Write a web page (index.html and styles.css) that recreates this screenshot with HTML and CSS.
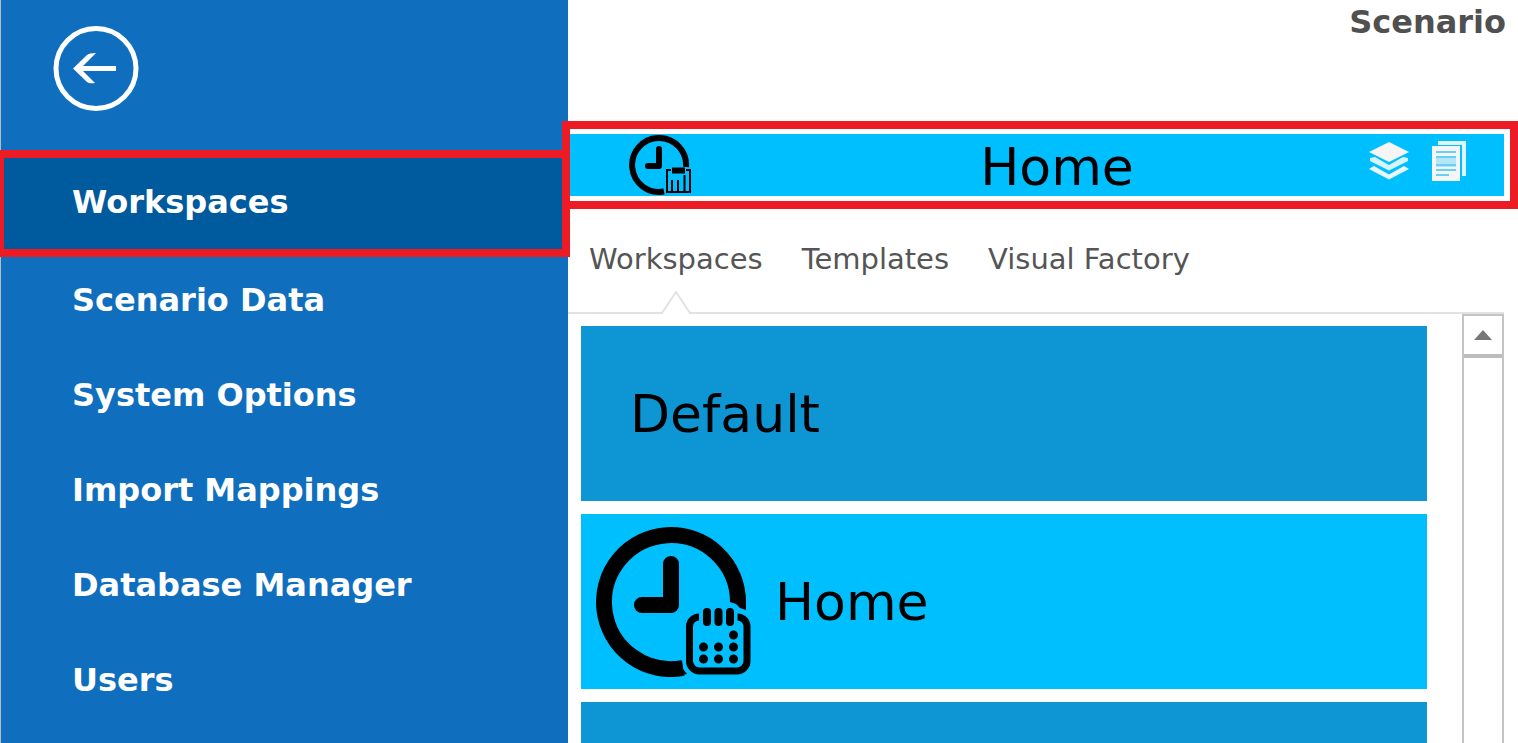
FILE: index.html
```html
<!DOCTYPE html>
<html lang="en">
<head>
  <meta charset="UTF-8" />
  <meta name="viewport" content="width=device-width, initial-scale=1.0"/>
  <title>Workspaces</title>
  <link rel="stylesheet" href="styles.css">
</head>
<body>
  <div class="app">
    <aside class="sidebar">
      <button class="back" type="button" aria-label="Back">
        <svg viewBox="0 0 86 86">
          <circle cx="43" cy="42.5" r="40" fill="none" stroke="#fff" stroke-width="5"/>
          <path d="M20 42.5L34 29Q36 27 43 27L30 40H63V45H30L42 57Q36 58 34 56Z" fill="#fff"/>
        </svg>
      </button>
      <nav class="menu">
        <a href="#" class="active">Workspaces</a>
        <a href="#">Scenario Data</a>
        <a href="#">System Options</a>
        <a href="#">Import Mappings</a>
        <a href="#">Database Manager</a>
        <a href="#">Users</a>
      </nav>
    </aside>

    <main class="main">
      <h1 class="heading">Scenario</h1>

      <header class="bar">
        <svg class="bar-clock" viewBox="0 0 62 60" fill="none" stroke="#000">
          <path d="M35 56.5A27 27 0 1 1 57 32" stroke-width="6"/>
          <path d="M30 14V31H19" stroke-width="6" stroke-linecap="round" stroke-linejoin="round"/>
          <path d="M42 35H38V57H61V35H57" stroke-width="2"/>
          <path d="M43 35.5H56" stroke-width="6"/>
          <path d="M43 45V56M49 45V56M55.5 40V56" stroke-width="2"/>
        </svg>
        <h2>Home</h2>
        <div class="bar-actions">
          <button type="button" aria-label="Layers">
            <svg width="40" height="40" viewBox="0 0 40 40">
              <path d="M20 1L40 11L20 21L0 11Z" fill="#f5f5f5"/>
              <path d="M1 20V17L6 16L20 24L34 16L39 17V20L20 29.5Z" fill="#d8f3fc"/>
              <path d="M0 28L5 25L20 33.5L35 25L40 28L20 38.5Z" fill="#eaf6fa"/>
            </svg>
          </button>
          <button type="button" aria-label="Documents">
            <svg width="34" height="40" viewBox="0 0 34 40">
              <path d="M6 0H34V35H30V4H6Z" fill="#dff4fb"/>
              <path d="M0 5H28V40H0Z" fill="#f5f5f5"/>
              <path d="M4 15H24V26H4Z" fill="#b5e6f7"/>
              <path d="M4 11H24M4 16H24M4 24H24M4 29H24M4 34H17" stroke="#66d0f5" stroke-width="2"/>
            </svg>
          </button>
        </div>
      </header>

      <nav class="tabs">
        <a href="#" class="current">Workspaces
          <svg class="notch" viewBox="0 0 32 24">
            <path d="M0 24V22H1L16 1L31 22H32V24Z" fill="#fff"/>
            <path d="M0 23H2L16 2L30 23H32" fill="none" stroke="#e2e2e2" stroke-width="2"/>
          </svg>
        </a>
        <a href="#">Templates</a>
        <a href="#">Visual Factory</a>
      </nav>

      <div class="content">
        <div class="tiles">
          <a href="#" class="tile">Default</a>
          <a href="#" class="tile home">
            <svg viewBox="0 0 156 150" fill="none" stroke="#000">
              <path d="M87 141A67 67 0 1 1 142 75" stroke-width="16"/>
              <path d="M134 74H150V83L144 81L140 77L134 75ZM86 133L87 142L91 147L82 149Z" fill="#000" stroke="none"/>
              <path d="M75 37V78H46" stroke-width="16" stroke-linecap="round" stroke-linejoin="round"/>
              <path d="M103 90A9.5 9.5 0 0 0 93.5 99.5V134A10 10 0 0 0 103.5 144H141A10 10 0 0 0 151 134V99.5A9.5 9.5 0 0 0 141.5 90" stroke-width="7"/>
              <path d="M111 85V95M122.5 85V95M134 85V95" stroke-width="8" stroke-linecap="round"/>
              <path d="M137.5 108h0M107.5 120h0M122.5 120h0M137.5 120h0M107.5 132h0M122.5 132h0M137.5 132h0" stroke-width="9" stroke-linecap="round"/>
            </svg>
            Home
          </a>
          <div class="tile"></div>
        </div>
        <div class="scroll">
          <button type="button" aria-label="Scroll up"></button>
        </div>
      </div>
    </main>
  </div>
</body>
</html>
```
FILE: styles.css
```css
* {
  margin: 0;
  box-sizing: border-box;
}

body {
  font-family: Verdana, "DejaVu Sans", sans-serif;
  background: #fff;
}

a {
  color: inherit;
  text-decoration: none;
}

button {
  border: 0;
  padding: 0;
  background: none;
  cursor: pointer;
}

svg {
  display: block;
}

.app {
  display: flex;
  height: 100vh;
  overflow: hidden;
}

/* Sidebar */
.sidebar {
  flex: 0 0 568px;
  background: #106ebe;
  border-left: 1px solid #b4bcc4;
  color: #fff;
}

.back {
  display: block;
  width: 86px;
  height: 86px;
  margin: 26px 0 43px 52px;
}

.menu a {
  display: block;
  height: 95px;
  line-height: 95px;
  padding-left: 71px;
  font-size: 32px;
  font-weight: bold;
}

.menu .active {
  position: relative;
  margin-bottom: 3px;
  background: #005a9e;
}

/* red frames over the selected item and the bar */
.menu .active::after,
.bar::after {
  content: "";
  position: absolute;
  border: 8px solid #ed1c24;
  pointer-events: none;
}

.menu .active::after {
  inset: -5px -2px -7px -5px;
}

/* Main */
.main {
  flex: 1;
  min-width: 0;
  display: flex;
  flex-direction: column;
}

.heading {
  height: 134px;
  padding: 2px 12px 0 0;
  line-height: 40px;
  font-size: 32px;
  text-align: right;
  color: #505050;
}

.bar {
  position: relative;
  display: grid;
  grid-template-columns: 1fr auto 1fr;
  align-items: center;
  height: 62px;
  margin-right: 14px;
  background: #00bfff;
}

.bar::after {
  inset: -13px -14px -13px -6px;
}

.bar-clock {
  width: 62px;
  height: 60px;
  margin-left: 61px;
}

.bar h2 {
  font-size: 52px;
  font-weight: normal;
  line-height: 58px;
  padding: 4px 0 0 42px;
}

.bar-actions {
  display: flex;
  justify-content: flex-end;
  gap: 23px;
  padding: 0 38px 8px 0;
}

.tabs {
  display: flex;
  gap: 39px;
  height: 118px;
  margin-right: 14px;
  padding: 43px 0 0 21px;
  border-bottom: 2px solid #e2e2e2;
  font-size: 29px;
  line-height: 40px;
  color: #555;
}

.tabs a {
  position: relative;
}

.notch {
  position: absolute;
  left: 50%;
  bottom: -2px;
  width: 32px;
  height: 24px;
  transform: translateX(-50%);
}

.content {
  flex: 1;
  min-height: 0;
  display: flex;
  margin-right: 14px;
}

.tiles {
  flex: 1;
  display: flex;
  flex-direction: column;
  gap: 13px;
  padding: 12px 35px 0 13px;
  overflow: hidden;
}

.tile {
  flex: none;
  display: flex;
  align-items: center;
  height: 175px;
  padding-left: 49px;
  background: #0e95d4;
  font-size: 52px;
  color: #000;
}

.tile.home {
  gap: 23px;
  padding-left: 15px;
  background: #00bfff;
}

.tile svg {
  width: 156px;
  height: 150px;
}

.scroll {
  width: 42px;
  border: solid #c3c3c3;
  border-width: 2px 2px 0;
}

.scroll button {
  display: flex;
  align-items: center;
  justify-content: center;
  width: 100%;
  height: 42px;
  border-bottom: 4px solid #bcbcbc;
}

.scroll button::before {
  content: "";
  border: solid transparent;
  border-width: 0 9px 10px;
  border-bottom-color: #777;
}
```
